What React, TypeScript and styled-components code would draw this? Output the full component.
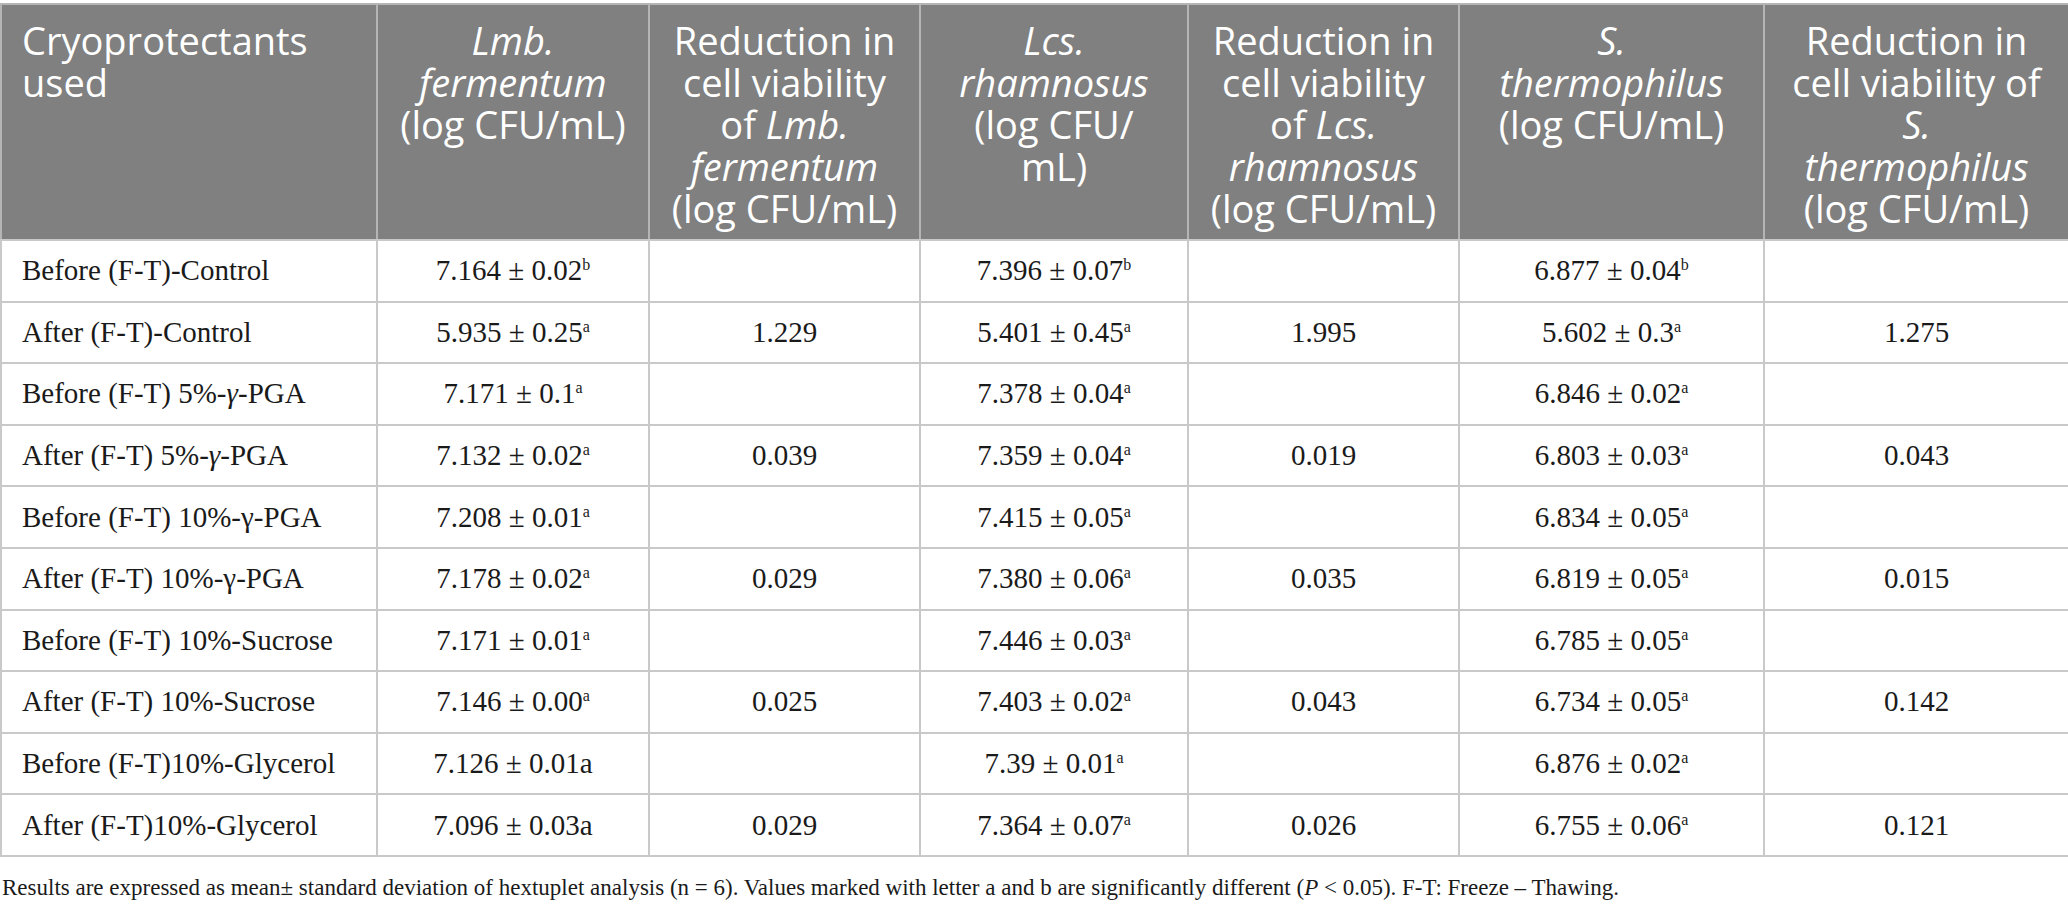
import styled, { createGlobalStyle } from "styled-components";

const GlobalStyle = createGlobalStyle`
    html, body {
        margin: 0;
        padding: 0;
        background: #fff;
    }
`;

type Row = {
    label: React.ReactNode;
    lmb: string;
    lmbSup?: string;
    lmbRed?: string;
    lcs: string;
    lcsSup?: string;
    lcsRed?: string;
    st: string;
    stSup?: string;
    stRed?: string;
};

const rows: Row[] = [
    { label: "Before (F-T)-Control", lmb: "7.164 ± 0.02", lmbSup: "b", lcs: "7.396 ± 0.07", lcsSup: "b", st: "6.877 ± 0.04", stSup: "b" },
    { label: "After (F-T)-Control", lmb: "5.935 ± 0.25", lmbSup: "a", lmbRed: "1.229", lcs: "5.401 ± 0.45", lcsSup: "a", lcsRed: "1.995", st: "5.602 ± 0.3", stSup: "a", stRed: "1.275" },
    { label: <>Before (F-T) 5%-<i>γ</i>-PGA</>, lmb: "7.171 ± 0.1", lmbSup: "a", lcs: "7.378 ± 0.04", lcsSup: "a", st: "6.846 ± 0.02", stSup: "a" },
    { label: <>After (F-T) 5%-<i>γ</i>-PGA</>, lmb: "7.132 ± 0.02", lmbSup: "a", lmbRed: "0.039", lcs: "7.359 ± 0.04", lcsSup: "a", lcsRed: "0.019", st: "6.803 ± 0.03", stSup: "a", stRed: "0.043" },
    { label: "Before (F-T) 10%-γ-PGA", lmb: "7.208 ± 0.01", lmbSup: "a", lcs: "7.415 ± 0.05", lcsSup: "a", st: "6.834 ± 0.05", stSup: "a" },
    { label: "After (F-T) 10%-γ-PGA", lmb: "7.178 ± 0.02", lmbSup: "a", lmbRed: "0.029", lcs: "7.380 ± 0.06", lcsSup: "a", lcsRed: "0.035", st: "6.819 ± 0.05", stSup: "a", stRed: "0.015" },
    { label: "Before (F-T) 10%-Sucrose", lmb: "7.171 ± 0.01", lmbSup: "a", lcs: "7.446 ± 0.03", lcsSup: "a", st: "6.785 ± 0.05", stSup: "a" },
    { label: "After (F-T) 10%-Sucrose", lmb: "7.146 ± 0.00", lmbSup: "a", lmbRed: "0.025", lcs: "7.403 ± 0.02", lcsSup: "a", lcsRed: "0.043", st: "6.734 ± 0.05", stSup: "a", stRed: "0.142" },
    { label: "Before (F-T)10%-Glycerol", lmb: "7.126 ± 0.01a", lcs: "7.39 ± 0.01", lcsSup: "a", st: "6.876 ± 0.02", stSup: "a" },
    { label: "After (F-T)10%-Glycerol", lmb: "7.096 ± 0.03a", lmbRed: "0.029", lcs: "7.364 ± 0.07", lcsSup: "a", lcsRed: "0.026", st: "6.755 ± 0.06", stSup: "a", stRed: "0.121" },
];

const Value = ({ v, sup }: { v: string; sup?: string }) => (
    <>
        {v}
        {sup && <Sup>{sup}</Sup>}
    </>
);

export default function App() {
    return (
        <Page>
            <GlobalStyle />
            <Table>
                <colgroup>
                    <col style={{ width: 376 }} />
                    <col style={{ width: 272 }} />
                    <col style={{ width: 271 }} />
                    <col style={{ width: 268 }} />
                    <col style={{ width: 271 }} />
                    <col style={{ width: 305 }} />
                    <col style={{ width: 305 }} />
                </colgroup>
                <thead>
                    <tr>
                        <Th $left>Cryoprotectants<br />used</Th>
                        <Th><i>Lmb.</i><br /><i>fermentum</i><br />(log CFU/mL)</Th>
                        <Th>Reduction in<br />cell viability<br />of <i>Lmb.</i><br /><i>fermentum</i><br />(log CFU/mL)</Th>
                        <Th><i>Lcs.</i><br /><i>rhamnosus</i><br />(log CFU/<br />mL)</Th>
                        <Th>Reduction in<br />cell viability<br />of <i>Lcs.</i><br /><i>rhamnosus</i><br />(log CFU/mL)</Th>
                        <Th><i>S.</i><br /><i>thermophilus</i><br />(log CFU/mL)</Th>
                        <Th>Reduction in<br />cell viability of<br /><i>S.</i><br /><i>thermophilus</i><br />(log CFU/mL)</Th>
                    </tr>
                </thead>
                <tbody>
                    {rows.map((r, i) => (
                        <tr key={i}>
                            <Td $left>{r.label}</Td>
                            <Td><Value v={r.lmb} sup={r.lmbSup} /></Td>
                            <Td>{r.lmbRed}</Td>
                            <Td><Value v={r.lcs} sup={r.lcsSup} /></Td>
                            <Td>{r.lcsRed}</Td>
                            <Td><Value v={r.st} sup={r.stSup} /></Td>
                            <Td>{r.stRed}</Td>
                        </tr>
                    ))}
                </tbody>
            </Table>
            <Footnote>
                Results are expressed as mean± standard deviation of hextuplet analysis (n = 6). Values marked with letter a and b are significantly different (<i>P</i> &lt; 0.05). F-T: Freeze – Thawing.
            </Footnote>
        </Page>
    );
}

// styled-components
const Page = styled.div`
    width: 2068px;
    padding-top: 3px;
    box-sizing: border-box;
`;

const Table = styled.table`
    width: 2068px;
    table-layout: fixed;
    border-collapse: collapse;
    border: 2px solid #c9c9c9;
`;

const Th = styled.th<{ $left?: boolean }>`
    background-color: #7f807f;
    color: #fff;
    font-family: "Open Sans", "Noto Sans", sans-serif;
    font-weight: 400;
    font-size: 38px;
    line-height: 42px;
    text-align: ${(p) => (p.$left ? "left" : "center")};
    vertical-align: top;
    padding: ${(p) => (p.$left ? "14px 8px 10px 20px" : "14px 4px 10px")};
    border: 2px solid #b5b5b5;
    border-bottom-color: #c9c9c9;
    white-space: nowrap;
    i {
        font-style: italic;
    }
`;

const Td = styled.td<{ $left?: boolean }>`
    height: 59.6px;
    font-family: "Liberation Serif", "Times New Roman", serif;
    font-size: 29px;
    color: #1a1a1a;
    text-align: ${(p) => (p.$left ? "left" : "center")};
    vertical-align: middle;
    padding: ${(p) => (p.$left ? "0 8px 0 20px" : "0 6px")};
    border: 2px solid #c9c9c9;
    white-space: nowrap;
`;

const Sup = styled.sup`
    font-size: 16px;
    line-height: 0;
    vertical-align: 10px;
`;

const Footnote = styled.p`
    margin: 16px 0 0 2px;
    font-family: "Liberation Serif", "Times New Roman", serif;
    font-size: 23px;
    line-height: 30px;
    color: #1a1a1a;
    white-space: nowrap;
`;
